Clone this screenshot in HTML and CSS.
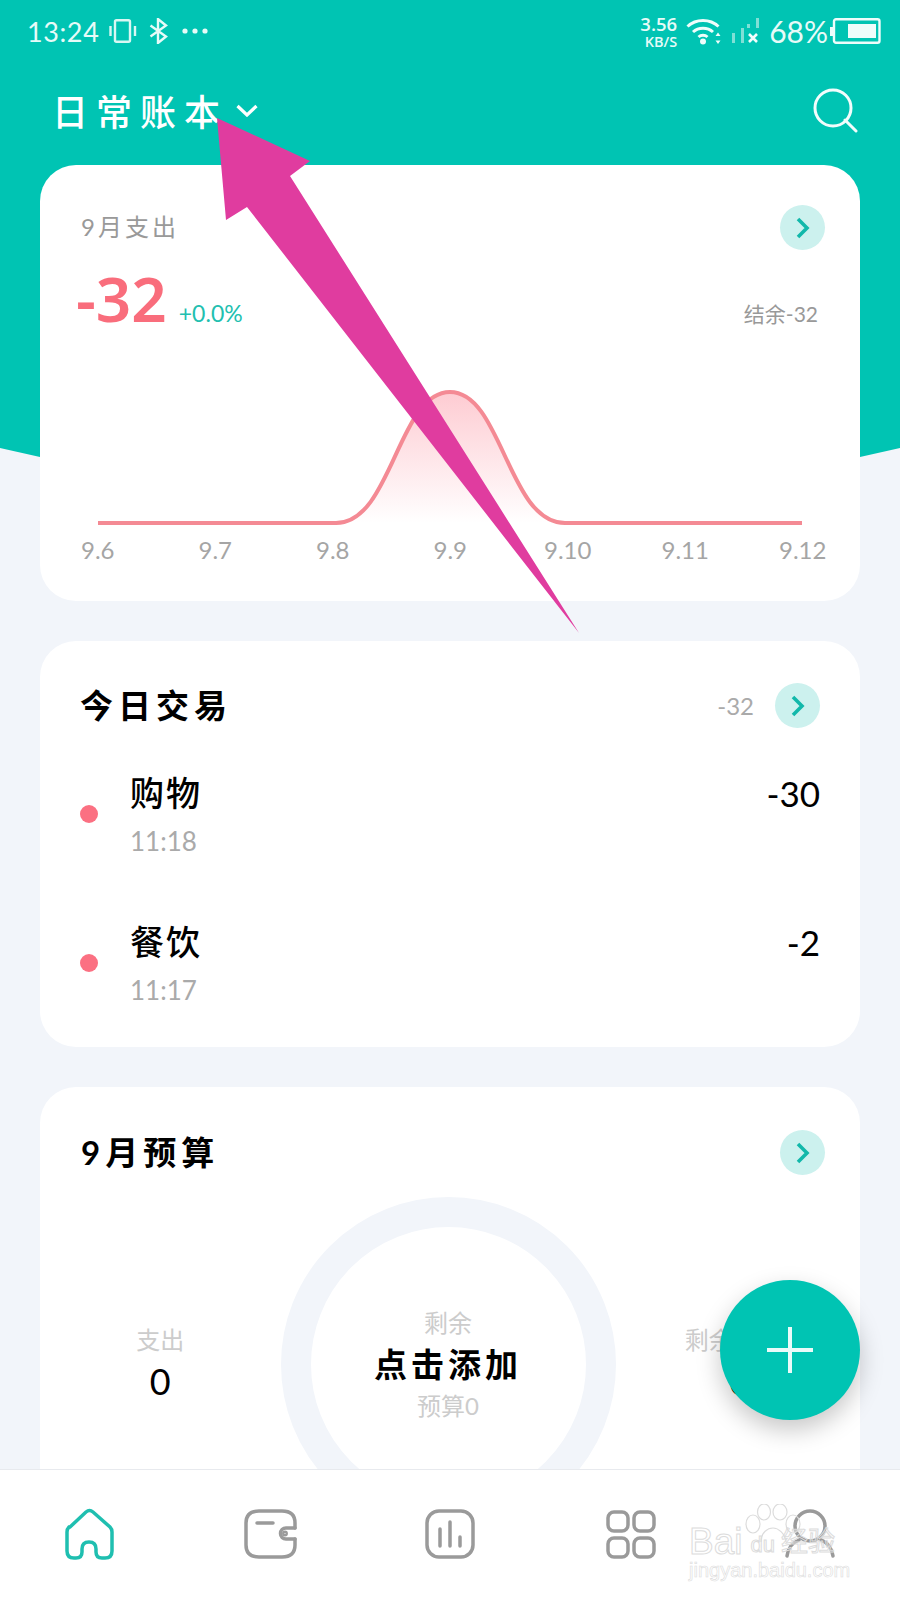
FILE: index.html
```html
<!DOCTYPE html>
<html lang="zh">
<head>
<meta charset="utf-8">
<title>日常账本</title>
<link rel="stylesheet" href="styles.css">
</head>
<body>
<div class="page">
  <div class="hero-bg"></div>
  <div class="status">
    <div class="status-left">
      <span class="clock">13:24</span>
      <svg class="ic-vibrate" width="28" height="24" viewBox="0 0 28 24" fill="none" stroke="#d9f7f3" stroke-width="2.4"><rect x="6" y="1.2" width="15" height="21.6" rx="1.5"/><path d="M1.5 7v10M26 7v10"/></svg>
      <svg class="ic-bt" width="20" height="26" viewBox="0 0 20 26" fill="none" stroke="#e6fbf8" stroke-width="2.4"><path d="M1.5 7.5 17 18.5 9 25V1l8 6.5L1.5 18.5"/></svg>
      <svg class="ic-dots" width="26" height="6" viewBox="0 0 26 6" fill="#e6fbf8"><circle cx="3" cy="3" r="2.6"/><circle cx="13" cy="3" r="2.6"/><circle cx="23" cy="3" r="2.6"/></svg>
    </div>
    <div class="status-right">
      <div class="speed"><span class="speed-num">3.56</span><span class="speed-unit">KB/S</span></div>
      <svg class="ic-wifi" width="36" height="28" viewBox="0 0 36 28" fill="none" stroke="#eefdfb" stroke-width="3"><path d="M1.5 9.5c8.5-8 22.500-8 31 0M7 15c5.500-5 14.500-5 20 0M12.500 20c2.500-2.300 6.500-2.300 9 0"/><circle cx="17" cy="24.500" r="3" fill="#eefdfb" stroke="none"/><path d="M32 15.500l2.500 3.500h-5zM32 27l-2.500-3.500h5z" fill="#eefdfb" stroke="none"/></svg>
      <svg class="ic-signal" width="28" height="26" viewBox="0 0 28 26"><rect x="1" y="15" width="3" height="10" fill="#7fe0d6"/><rect x="10" y="10" width="3" height="15" fill="#7fe0d6"/><rect x="16" y="6" width="3" height="4" fill="#7fe0d6"/><rect x="25" y="0" width="3" height="10" fill="#7fe0d6"/><path d="M18 16l8 8M26 16l-8 8" stroke="#f2fdfc" stroke-width="2.600"/></svg>
      <span class="pct">68%</span>
      <svg class="ic-batt" width="51" height="26" viewBox="0 0 51 26"><rect x="0" y="9" width="3" height="9" fill="#eefdfb"/><rect x="4" y="1.200" width="45.500" height="23.600" rx="2" fill="none" stroke="#eefdfb" stroke-width="2.400"/><rect x="18" y="6" width="28" height="14" fill="#eefdfb"/></svg>
    </div>
  </div>

  <div class="topbar">
    <div class="book">
      <span class="book-name">日常账本</span>
      <svg width="22" height="13" viewBox="0 0 22 13" fill="none" stroke="#fff" stroke-width="3.200"><path d="M1.500 2 11 11l9.500-9"/></svg>
    </div>
    <svg width="46" height="46" viewBox="0 0 46 46" fill="none" stroke="#f2fdfc" stroke-width="3"><circle cx="21" cy="21" r="18"/><path d="M33 33 44 44" stroke-linecap="round"/></svg>
  </div>

  <main class="cards">
    <section class="card card-month">
      <div class="head head-a">
        <span class="muted-title">9月支出</span>
        <span class="go"><svg width="14" height="22" viewBox="0 0 14 22" fill="none" stroke="#12b8aa" stroke-width="3.600"><path d="M2 2l9 9-9 9"/></svg></span>
      </div>
      <div class="stats">
        <div class="stats-main"><span class="big">-32</span><span class="delta">+0.0%</span></div>
        <span class="balance">结余-32</span>
      </div>
      <svg class="chart" width="820" height="150" viewBox="0 0 820 150">
        <defs>
          <linearGradient id="bell" x1="0" y1="0" x2="0" y2="1">
            <stop offset="0" stop-color="#fb7082" stop-opacity=".36"/>
            <stop offset="1" stop-color="#fb7082" stop-opacity="0"/>
          </linearGradient>
        </defs>
        <path d="M296 143C352 143 358 12 410 12C462 12 468 143 525 143Z" fill="url(#bell)"/>
        <path d="M58 143H296C352 143 358 12 410 12C462 12 468 143 525 143H762" fill="none" stroke="#f48a94" stroke-width="4"/>
      </svg>
      <div class="axis">
        <span>9.6</span><span>9.7</span><span>9.8</span><span>9.9</span><span>9.10</span><span>9.11</span><span>9.12</span>
      </div>
    </section>

    <section class="card card-today">
      <div class="head head-b">
        <h2 class="title">今日交易</h2>
        <div class="head-side">
          <span class="sum">-32</span>
          <span class="go"><svg width="14" height="22" viewBox="0 0 14 22" fill="none" stroke="#12b8aa" stroke-width="3.600"><path d="M2 2l9 9-9 9"/></svg></span>
        </div>
      </div>
      <div class="rows">
        <div class="row">
          <span class="dot"></span>
          <div class="row-text"><span class="row-name">购物</span><span class="row-time">11:18</span></div>
          <span class="row-amt">-30</span>
        </div>
        <div class="row">
          <span class="dot"></span>
          <div class="row-text"><span class="row-name">餐饮</span><span class="row-time">11:17</span></div>
          <span class="row-amt">-2</span>
        </div>
      </div>
    </section>

    <section class="card card-budget">
      <div class="head head-a">
        <h2 class="title">9月预算</h2>
        <span class="go"><svg width="14" height="22" viewBox="0 0 14 22" fill="none" stroke="#12b8aa" stroke-width="3.600"><path d="M2 2l9 9-9 9"/></svg></span>
      </div>
      <div class="budget">
        <div class="side"><span class="faint">支出</span><span class="side-val">0</span></div>
        <div class="ring">
          <span class="faint">剩余</span>
          <span class="ring-main">点击添加</span>
          <span class="faint">预算0</span>
        </div>
        <div class="side"><span class="faint faint-long">剩余预算</span><span class="side-val">0</span></div>
      </div>
    </section>
  </main>

  <button class="fab" type="button" aria-label="添加"><svg width="48" height="48" viewBox="0 0 48 48" stroke="#eafbf9" stroke-width="4"><path d="M24 1v46M1 24h46"/></svg></button>

  <svg class="arrow" width="900" height="1600" viewBox="0 0 900 1600"><polygon points="217,118 310,161 290,176 579,633 247,207 226,220" fill="#e03c9f"/></svg>

  <nav class="tabs">
    <span class="tab"><svg width="50" height="52" viewBox="0 0 50 52" fill="none" stroke="#1fbfb0" stroke-width="3.500"><path d="M5 19 21 4q3.500-3 7 0l17 15q2 2 2 5v19q0 7-7 7h-3q-6 0-6-6v-3q0-7-7-7t-7 7v3q0 6-6 6h-2q-7 0-7-7V24q0-3 2-5Z"/></svg></span>
    <span class="tab"><svg width="54" height="52" viewBox="0 0 54 52" fill="none" stroke="#9a9a9a" stroke-width="3.500" stroke-linecap="round"><path d="M52 20v-5Q52 3 39 3H16Q3 3 3 15v22q0 12 13 12h23q13 0 13-12v-6"/><path d="M52 20H43a5.500 5.500 0 0 0 0 11h9M14 15h16"/><circle cx="42" cy="25.500" r="1.200"/></svg></span>
    <span class="tab"><svg width="52" height="52" viewBox="0 0 52 52" fill="none" stroke="#9a9a9a" stroke-width="3.500" stroke-linecap="round"><rect x="3" y="3" width="46" height="46" rx="12"/><path d="M16 21v17M26 14v24M36 29v9"/></svg></span>
    <span class="tab"><svg width="52" height="52" viewBox="0 0 52 52" fill="none" stroke="#9a9a9a" stroke-width="3.500"><rect x="4" y="4" width="20" height="19" rx="6"/><rect x="30" y="4" width="20" height="19" rx="6"/><rect x="4" y="30" width="20" height="19" rx="6"/><rect x="30" y="30" width="20" height="19" rx="6"/></svg></span>
    <span class="tab"><svg width="52" height="52" viewBox="0 0 52 52" fill="none" stroke="#9a9a9a" stroke-width="3.500" stroke-linecap="round"><circle cx="26" cy="18" r="15"/><path d="M3 48c1-9 7-14 12-16M37 32c6 2 11 8 12 16"/></svg></span>
    <div class="mark">
      <svg class="paw" width="60" height="44" viewBox="0 0 60 44" fill="none" stroke="#dcdcdc" stroke-width="1.200"><ellipse cx="8" cy="20" rx="7" ry="9"/><ellipse cx="19" cy="8" rx="6.500" ry="8"/><ellipse cx="35" cy="8" rx="7" ry="8"/><ellipse cx="48" cy="20" rx="7" ry="9"/><path d="M16 38c0-10 7-14 12-14s12 5 13 14"/></svg>
      <div class="mark-main"><span>Bai</span><span class="mark-du">du</span><span>经验</span></div>
      <div class="mark-url">jingyan.baidu.com</div>
    </div>
  </nav>
</div>
</body>
</html>
```
FILE: styles.css
```css
* { box-sizing: border-box; }
html, body { margin: 0; padding: 0; }
body {
  background: #f2f5fa;
  font-family: "Lato", "Noto Sans CJK SC", "Liberation Sans", sans-serif;
}
.page {
  position: relative;
  width: 900px;
  height: 1600px;
  overflow: hidden;
  background: #f2f5fa;
}
.hero-bg {
  position: absolute;
  inset: 0 0 auto 0;
  height: 500px;
  background: #00c4b3;
  clip-path: polygon(0 0, 100% 0, 100% 448px, 860px 457px, 450px 490px, 40px 457px, 0 448px);
}

/* status bar */
.status {
  position: relative;
  height: 62px;
  padding: 0 19px 0 27px;
  display: flex;
  justify-content: space-between;
  align-items: center;
  color: #e6fbf8;
}
.status-left, .status-right { display: flex; align-items: center; }
.clock { font-size: 27px; font-weight: 400; letter-spacing: .6px; width: 82px; }
.ic-vibrate { margin-right: 12px; }
.ic-bt { margin-right: 13px; }
.speed { display: flex; flex-direction: column; align-items: flex-end; margin-right: 9px; font-family: "Open Sans", sans-serif; font-weight: 600; }
.speed-num { font-size: 18.500px; line-height: 20px; }
.speed-unit { font-size: 14.500px; line-height: 15px; }
.ic-wifi { margin-right: 9px; }
.ic-signal { margin-right: 10px; }
.pct { font-size: 30px; font-weight: 400; margin-right: 2px; }

/* title row */
.topbar {
  position: relative;
  height: 96px;
  margin-bottom: 7px;
  padding: 0 42px 0 52px;
  display: flex;
  justify-content: space-between;
  align-items: center;
}
.book { display: flex; align-items: center; gap: 8px; }
.book-name { font-size: 36px; line-height: 44px; letter-spacing: 8px; font-weight: 500; color: #fff; position: relative; top: 2px; }

/* cards */
.cards {
  position: relative;
  padding: 0 40px;
  display: flex;
  flex-direction: column;
  gap: 40px;
}
.card { background: #fff; border-radius: 36px; }
.card-month { height: 436px; }
.card-today { height: 406px; padding: 0 40px; }
.card-budget { height: 520px; }

.head { display: flex; justify-content: space-between; align-items: center; height: 45px; }
.head-a { padding: 0 35px 0 41px; }
.card-month .head-a { position: relative; top: 40px; }
.card-budget .head-a { position: relative; top: 43px; }
.head-b { position: relative; top: 42px; }
.head-side { display: flex; align-items: center; gap: 21px; }

.go {
  width: 45px;
  height: 45px;
  border-radius: 50%;
  background: #ccf1ee;
  display: flex;
  align-items: center;
  justify-content: center;
}
.go svg { margin-left: 1px; }
.muted-title { font-size: 24px; letter-spacing: 3px; color: #999; margin-bottom: 4px; }
.title { margin: 0; font-size: 33px; line-height: 45px; font-weight: 700; letter-spacing: 5px; color: #000; }
.sum { font-size: 24px; color: #aaa; font-weight: 400; }

.stats {
  height: 60px;
  margin-top: 58px;
  padding: 0 42px 0 36px;
  display: flex;
  justify-content: space-between;
  align-items: baseline;
}
.stats-main { display: flex; align-items: baseline; gap: 12px; }
.big { font-family: "Noto Sans", sans-serif; font-size: 62px; line-height: 60px; font-weight: 600; color: #f96d7c; }
.delta { font-size: 23px; color: #22bfb0; }
.balance { font-size: 21px; color: #999; }

.chart { display: block; margin-top: 52px; }
.axis {
  display: grid;
  grid-template-columns: repeat(7, 117.500px);
  justify-items: center;
  margin-left: -1px;
  font-size: 24px;
  line-height: 40px;
  font-weight: 400;
  color: #a5a5a5;
}

.rows { display: flex; flex-direction: column; gap: 65px; margin-top: 86px; }
.row { display: flex; align-items: center; gap: 32px; height: 84px; }
.dot { width: 18px; height: 18px; border-radius: 50%; background: #fb7082; flex: none; }
.row-text { flex: 1; display: flex; flex-direction: column; gap: 12px; }
.row-name { font-size: 34px; line-height: 42px; letter-spacing: 2px; font-weight: 500; color: #000; }
.row-time { font-size: 26px; line-height: 30px; font-weight: 400; color: #aaa; }
.row-amt { align-self: flex-start; font-size: 35px; line-height: 42px; color: #000; font-weight: 400; }

.budget { display: flex; margin-top: 65px; }
.side { flex: 1; display: flex; flex-direction: column; align-items: center; justify-content: center; padding-bottom: 8px; height: 335px; }
.faint { font-size: 24px; line-height: 41px; color: #ccc; }
.faint-long { margin-right: 14px; }
.side-val { font-size: 36px; line-height: 42px; color: #000; }
.ring {
  flex: none;
  width: 335px;
  height: 335px;
  margin-right: 4px;
  padding-bottom: 2px;
  border: 30px solid #f2f5fa;
  border-radius: 50%;
  display: flex;
  flex-direction: column;
  align-items: center;
  justify-content: center;
}
.ring-main { font-size: 33px; line-height: 42px; font-weight: 700; letter-spacing: 4px; color: #000; }

/* overlays */
.fab {
  position: absolute;
  left: 720px;
  top: 1280px;
  width: 140px;
  height: 140px;
  border: 0;
  padding: 0;
  border-radius: 50%;
  background: #00c4b3;
  box-shadow: 0 10px 24px rgba(0, 0, 0, .22);
  display: flex;
  align-items: center;
  justify-content: center;
}
.arrow { position: absolute; left: 0; top: 0; pointer-events: none; }

.tabs {
  position: absolute;
  left: 0;
  right: 0;
  bottom: 0;
  height: 131px;
  padding-top: 38px;
  background: #fff;
  border-top: 1px solid #e8eaee;
  display: grid;
  grid-template-columns: repeat(5, 180px);
  justify-items: center;
  align-items: start;
}
.tab { display: block; height: 52px; }
.tab svg { display: block; }

.mark {
  position: absolute;
  left: 689px;
  top: 22px;
  width: 170px;
  height: 90px;
  color: transparent;
  font-family: "Liberation Sans", "Noto Sans CJK SC", sans-serif;
}
.paw { position: absolute; left: 56px; top: 12px; }
.mark-main {
  position: absolute;
  left: 0;
  top: 30px;
  display: flex;
  align-items: center;
  font-size: 37px;
  line-height: 34px;
  white-space: nowrap;
  -webkit-text-stroke: 1px #dcdcdc;
}
.mark-du { font-size: 22px; margin: 6px 6px 0 8px; }
.mark-main span:last-child { font-size: 27px; }
.mark-url {
  position: absolute;
  left: 0;
  top: 67px;
  font-size: 20px;
  line-height: 22px;
  white-space: nowrap;
  -webkit-text-stroke: .6px #dcdcdc;
}
```
